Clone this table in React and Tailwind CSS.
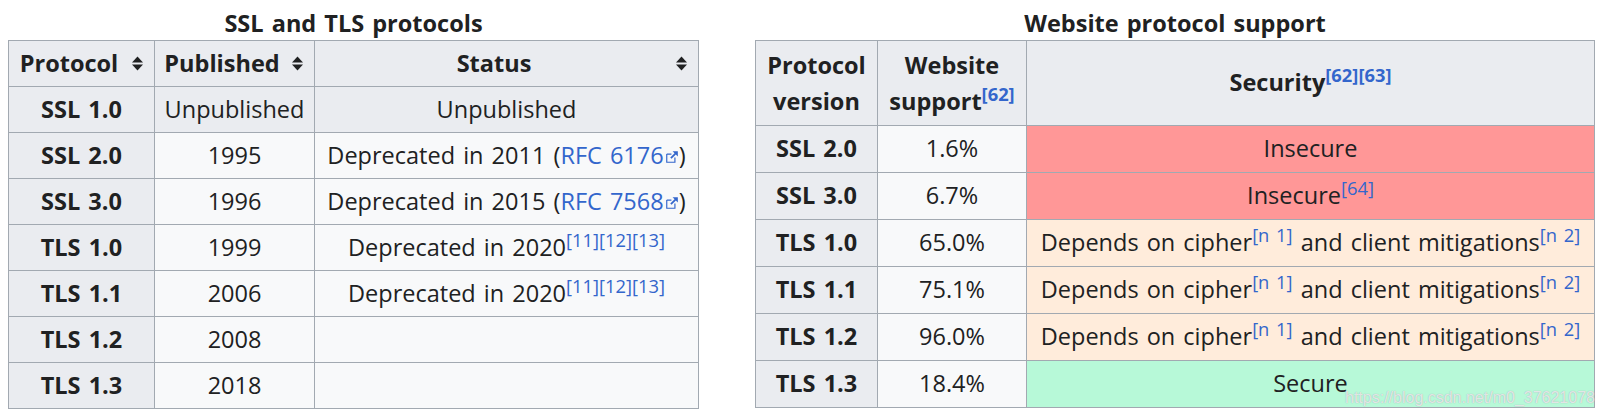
import React from "react";

const SortIcon = () => (
  <svg width="11" height="15" viewBox="0 0 11 15" className="block">
    <path d="M0 6.5 L5.5 0.5 L11 6.5 Z" fill="#202122" />
    <path d="M0 8.5 L5.5 14.5 L11 8.5 Z" fill="#202122" />
  </svg>
);

const ExtIcon = () => (
  <svg width="14" height="14" viewBox="0 0 12 12" className="inline-block align-baseline ml-[1px]">
    <path fill="none" stroke="#3366cc" strokeWidth="1" d="M1.5 3.5 h4 M1.5 3.5 v7 h7 v-4" />
    <path fill="#3366cc" d="M6.5 1 h4.5 v4.5 L9.3 3.8 L5.6 7.5 L4.5 6.4 L8.2 2.7 Z" />
  </svg>
);

const Sup = ({ children }) => <sup className="text-[0.78em] text-[#3366cc]">{children}</sup>;

const Th = ({ children, sort }) => (
  <div className={`bg-[#eaecf0] font-bold flex items-center text-center ${sort ? "pl-[9px]" : "px-[9px] justify-center"}`}>
    {sort ? (
      <>
        <span className="flex-1 text-center">{children}</span>
        <span className="w-[34px] flex justify-center">
          <SortIcon />
        </span>
      </>
    ) : (
      <span>{children}</span>
    )}
  </div>
);

const Td = ({ children, bg = "bg-[#f8f9fa]" }) => (
  <div className={`${bg} flex items-center justify-center text-center px-[9px] whitespace-nowrap`}>
    <span>{children}</span>
  </div>
);

const Link = ({ children }) => <span className="text-[#3366cc]">{children}</span>;

const dep = (
  <>
    Deprecated in 2020
    <Sup>[11][12][13]</Sup>
  </>
);

const leftRows = [
  ["SSL 1.0", "Unpublished", "Unpublished", true],
  ["SSL 2.0", "1995", <>Deprecated in 2011 (<Link>RFC 6176<ExtIcon /></Link>)</>],
  ["SSL 3.0", "1996", <>Deprecated in 2015 (<Link>RFC 7568<ExtIcon /></Link>)</>],
  ["TLS 1.0", "1999", dep],
  ["TLS 1.1", "2006", dep],
  ["TLS 1.2", "2008", ""],
  ["TLS 1.3", "2018", ""],
];

const depends = (
  <>
    Depends on cipher<Sup>[n 1]</Sup> and client mitigations<Sup>[n 2]</Sup>
  </>
);

const rightRows = [
  ["SSL 2.0", "1.6%", "Insecure", "bg-[#ff9797]"],
  ["SSL 3.0", "6.7%", <>Insecure<Sup>[64]</Sup></>, "bg-[#ff9797]"],
  ["TLS 1.0", "65.0%", depends, "bg-[#ffecdb]"],
  ["TLS 1.1", "75.1%", depends, "bg-[#ffecdb]"],
  ["TLS 1.2", "96.0%", depends, "bg-[#ffecdb]"],
  ["TLS 1.3", "18.4%", "Secure", "bg-[#b7f9d8]"],
];

export default function App() {
  return (
    <div className="relative w-[1601px] h-[416px] bg-white text-[#202122] font-['Open_Sans',sans-serif] text-[23.5px] leading-[1.6] [word-spacing:2px]">
      <div className="flex items-start gap-[56px] pl-[8px]">
        <div className="flex flex-col">
          <div className="font-bold text-center pt-[9px] pb-[3px] leading-[28px]">SSL and TLS protocols</div>
          <div className="grid grid-cols-[145px_159px_383px] grid-rows-[45px_repeat(7,45px)] gap-px bg-[#a2a9b1] p-px">
            <Th sort>Protocol</Th>
            <Th sort>Published</Th>
            <Th sort>Status</Th>
            {leftRows.map(([p, y, s, gray]) => (
              <React.Fragment key={p}>
                <Th>{p}</Th>
                <Td bg={gray ? "bg-[#eaecf0]" : "bg-[#f8f9fa]"}>{y}</Td>
                <Td bg={gray ? "bg-[#eaecf0]" : "bg-[#f8f9fa]"}>{s}</Td>
              </React.Fragment>
            ))}
          </div>
        </div>
        <div className="flex flex-col">
          <div className="font-bold text-center pt-[9px] pb-[3px] leading-[28px]">Website protocol support</div>
          <div className="grid grid-cols-[121px_148px_567px] grid-rows-[84px_repeat(6,46px)] gap-px bg-[#a2a9b1] p-px">
            <Th>
              <span className="block leading-[36px]">
                Protocol
                <br />
                version
              </span>
            </Th>
            <Th>
              <span className="block leading-[36px]">
                Website
                <br />
                support<Sup>[62]</Sup>
              </span>
            </Th>
            <Th>
              Security<Sup>[62][63]</Sup>
            </Th>
            {rightRows.map(([p, w, s, bg]) => (
              <React.Fragment key={p}>
                <Th>{p}</Th>
                <Td>{w}</Td>
                <Td bg={bg}>{s}</Td>
              </React.Fragment>
            ))}
          </div>
        </div>
      </div>
      <div className="absolute left-[1345px] top-[388px] text-[16px] leading-[20px] font-['Liberation_Sans',sans-serif] [word-spacing:0px] text-white/70 [text-shadow:0_0_1px_#9aa0a6]">
        https://blog.csdn.net/m0_37621078
      </div>
    </div>
  );
}
